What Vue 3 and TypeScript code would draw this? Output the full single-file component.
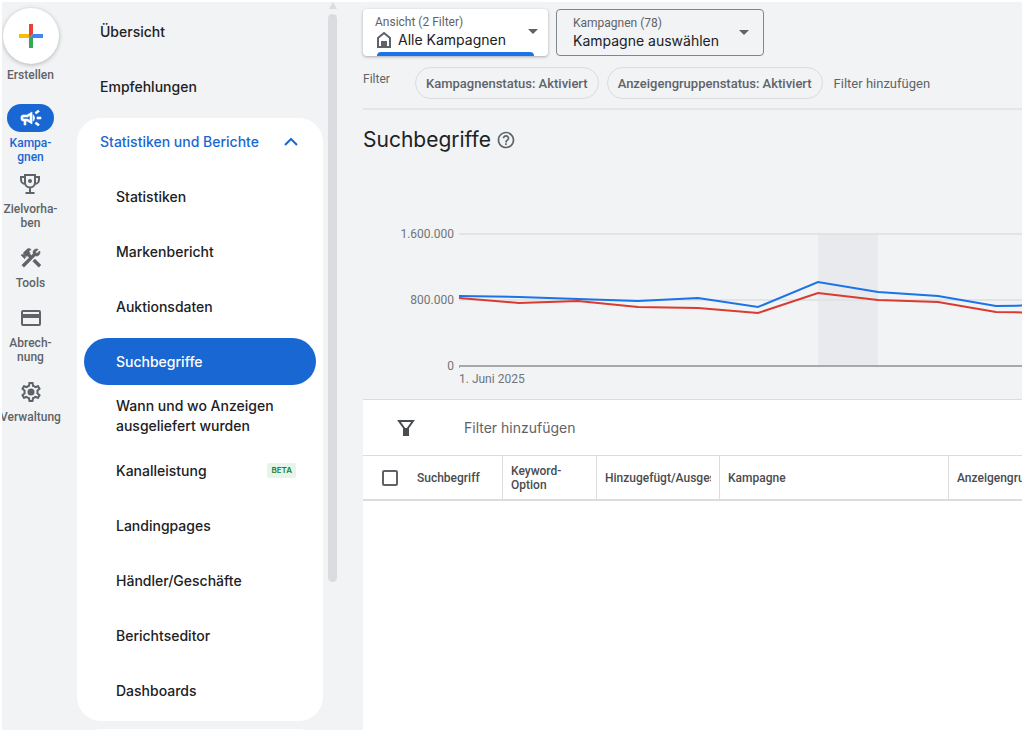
<script setup lang="ts">
import { ref } from 'vue'

interface RailItem {
  icon: 'campaign' | 'trophy' | 'tools' | 'card' | 'settings'
  lines: string[]
  active?: boolean
}

interface NavItem {
  lines: string[]
  active?: boolean
  badge?: string
}

const railItems: RailItem[] = [
  { icon: 'campaign', lines: ['Kampa-', 'gnen'], active: true },
  { icon: 'trophy', lines: ['Zielvorha-', 'ben'] },
  { icon: 'tools', lines: ['Tools'] },
  { icon: 'card', lines: ['Abrech-', 'nung'] },
  { icon: 'settings', lines: ['Verwaltung'] },
]

const topLinks = ['Übersicht', 'Empfehlungen']

const reportItems: NavItem[] = [
  { lines: ['Statistiken'] },
  { lines: ['Markenbericht'] },
  { lines: ['Auktionsdaten'] },
  { lines: ['Suchbegriffe'], active: true },
  { lines: ['Wann und wo Anzeigen', 'ausgeliefert wurden'] },
  { lines: ['Kanalleistung'], badge: 'BETA' },
  { lines: ['Landingpages'] },
  { lines: ['Händler/Geschäfte'] },
  { lines: ['Berichtseditor'] },
  { lines: ['Dashboards'] },
]

const chips = ['Kampagnenstatus: Aktiviert', 'Anzeigengruppenstatus: Aktiviert']

const blueSeries = '0,66 60,67 119,69 179,71 239,68 299,77 359,52 419,62 479,66 537,76 600,75'
const redSeries = '0,68 60,73 119,71 179,77 239,78 299,83 359,63 419,70 479,72 537,82 600,83'

const reportsOpen = ref(true)
const allSelected = ref(false)
</script>

<template>
  <div class="shell">
    <nav class="rail" aria-label="Hauptmenü">
      <button class="rail-item create" type="button">
        <span class="create-disc">
          <svg width="24" height="24" viewBox="0 0 24 24" aria-hidden="true">
            <path d="M10 0h4v10l-4 4z" fill="#ea4335" />
            <path d="M0 10h10v4H0z" fill="#fbbc04" />
            <path d="M14 10h10v4H10z" fill="#4285f4" />
            <path d="M10 14h4v10h-4z" fill="#34a853" />
          </svg>
        </span>
        <span class="rail-label">Erstellen</span>
      </button>
      <a
        v-for="item in railItems"
        :key="item.icon"
        href="#"
        class="rail-item"
        :class="{ active: item.active }"
      >
        <span class="rail-icon">
          <svg width="24" height="24" viewBox="0 0 24 24" fill="currentColor" aria-hidden="true">
            <path
              v-if="item.icon === 'campaign'"
              stroke="currentColor"
              stroke-width="0.6"
              d="M18 11v2h4v-2h-4zm-2 6.61c.96.71 2.21 1.65 3.2 2.39.4-.53.8-1.07 1.2-1.6-.99-.74-2.24-1.68-3.2-2.4-.4.54-.8 1.08-1.2 1.61zM20.4 5.6c-.4-.53-.8-1.07-1.2-1.6-.99.74-2.24 1.68-3.2 2.4.4.53.8 1.07 1.2 1.6.96-.72 2.21-1.65 3.2-2.4zM4 9c-1.1 0-2 .9-2 2v2c0 1.1.9 2 2 2h1v4h2v-4h1l5 3V6L8 9H4zm5.03 1.71L11 9.53v4.94l-1.97-1.18-.48-.29H4v-2h4.55l.48-.29zM15.5 12c0-1.33-.58-2.53-1.5-3.35v6.69c.92-.81 1.5-2.01 1.5-3.34z"
            />
            <g v-else-if="item.icon === 'trophy'">
              <path
                d="M7 3h10v7.500a5 5 0 0 1-10 0zM7 5H3v2.500c0 2.500 1.800 4.500 4.300 4.500M17 5h4v2.500c0 2.500-1.800 4.500-4.300 4.500M12 15.500V20M7.500 21h9"
                fill="none"
                stroke="currentColor"
                stroke-width="2"
              />
              <circle cx="12" cy="9" r="2" />
            </g>
            <path
              v-else-if="item.icon === 'tools'"
              stroke="currentColor"
              stroke-width="0.6"
              d="M13.783 15.172l2.121-2.121 5.996 5.996-2.121 2.121zM17.5 10c1.93 0 3.5-1.57 3.5-3.5 0-.58-.16-1.12-.41-1.6l-2.7 2.7-1.49-1.49 2.7-2.7c-.48-.25-1.02-.41-1.6-.41C15.57 3 14 4.57 14 6.5c0 .41.08.8.21 1.16l-1.85 1.85-1.78-1.78.71-.71-1.41-1.41L12 3.490c-1.17-1.17-3.07-1.17-4.24 0L4.220 7.030l1.41 1.41H2.810l-.71.71 3.54 3.54.71-.71V9.150l1.41 1.41.71-.71 1.78 1.78-7.41 7.41 2.12 2.12L16.340 9.790c.36.13.75.21 1.16.21z"
            />
            <path
              v-else-if="item.icon === 'card'"
              fill-rule="evenodd"
              d="M4 4h16a2 2 0 0 1 2 2v12a2 2 0 0 1-2 2H4a2 2 0 0 1-2-2V6a2 2 0 0 1 2-2zm0 2v2h16V6zm0 6v6h16v-6z"
            />
            <g v-else>
              <path
                d="M19.43 12.98c.04-.32.07-.64.07-.98 0-.34-.03-.66-.07-.98l2.11-1.65c.19-.15.24-.42.12-.64l-2-3.460c-.09-.16-.26-.25-.44-.25-.06 0-.12.01-.17.03l-2.490 1c-.52-.4-1.08-.73-1.69-.98l-.38-2.650C14.460 2.180 14.250 2 14 2h-4c-.25 0-.46.18-.49.42l-.38 2.650c-.61.25-1.17.59-1.69.98l-2.490-1c-.06-.02-.12-.03-.18-.03-.17 0-.34.09-.43.25l-2 3.460c-.13.22-.07.49.12.64l2.110 1.650c-.04.32-.07.65-.07.98 0 .33.03.66.07.98l-2.110 1.650c-.19.15-.24.42-.12.64l2 3.460c.09.16.26.25.44.25.06 0 .12-.01.17-.03l2.490-1c.52.4 1.080.73 1.690.98l.38 2.650c.03.24.24.42.49.42h4c.25 0 .46-.18.49-.42l.38-2.650c.61-.25 1.170-.59 1.690-.98l2.490 1c.06.02.12.03.18.03.17 0 .34-.09.43-.25l2-3.460c.12-.22.07-.49-.12-.64l-2.110-1.650zm-1.98-1.710c.04.31.05.52.05.73 0 .21-.02.43-.05.73l-.14 1.130.89.7 1.080.84-.7 1.210-1.270-.51-1.040-.42-.9.68c-.43.32-.84.56-1.250.73l-1.060.43-.16 1.130-.2 1.350h-1.400l-.19-1.350-.16-1.130-1.060-.43c-.43-.18-.83-.41-1.230-.71l-.91-.7-1.060.43-1.270.51-.7-1.210 1.080-.84.89-.7-.14-1.130c-.03-.31-.05-.54-.05-.74s.02-.43.05-.73l.14-1.130-.89-.7-1.080-.84.7-1.210 1.270.51 1.040.42.9-.68c.43-.32.84-.56 1.250-.73l1.060-.43.16-1.130.2-1.350h1.390l.19 1.350.16 1.130 1.060.43c.43.18.83.41 1.230.71l.91.7 1.060-.43 1.270-.51.7 1.210-1.070.85-.89.7.14 1.130z"
              />
              <circle cx="12" cy="12" r="3.5" />
            </g>
          </svg>
        </span>
        <span class="rail-label">
          <span v-for="line in item.lines" :key="line">{{ line }}</span>
        </span>
      </a>
    </nav>

    <nav class="side" aria-label="Kampagnenmenü">
      <a v-for="link in topLinks" :key="link" class="side-link top" href="#">{{ link }}</a>
      <section class="group">
        <button
          class="side-link group-head"
          type="button"
          :aria-expanded="reportsOpen"
          @click="reportsOpen = !reportsOpen"
        >
          Statistiken und Berichte
          <svg width="14" height="8" viewBox="0 0 14 8" aria-hidden="true">
            <path d="M1 7l6-6 6 6" fill="none" stroke="currentColor" stroke-width="2" />
          </svg>
        </button>
        <template v-if="reportsOpen">
          <a
            v-for="item in reportItems"
            :key="item.lines[0]"
            href="#"
            class="side-link sub"
            :class="{ active: item.active, double: item.lines.length > 1 }"
          >
            <span class="sub-text">
              <span v-for="line in item.lines" :key="line">{{ line }}</span>
            </span>
            <span v-if="item.badge" class="badge">{{ item.badge }}</span>
          </a>
        </template>
      </section>
      <section class="group next"></section>
    </nav>

    <div class="scroll" aria-hidden="true">
      <span class="scroll-arrow"></span>
      <span class="scroll-thumb"></span>
    </div>

    <main class="main">
      <div class="pickers">
        <button class="picker view" type="button">
          <span class="picker-text">
            <span class="picker-label">Ansicht (2 Filter)</span>
            <span class="picker-value">
              <svg width="16" height="16" viewBox="0 0 16 16" aria-hidden="true">
                <path d="M2 6l6-5 6 5v9H2z" fill="none" stroke="#5f6368" stroke-width="2" />
                <path d="M5 9h6v6H5z" fill="#5f6368" />
              </svg>
              Alle Kampagnen
            </span>
          </span>
          <span class="caret"></span>
          <span class="underline"></span>
        </button>
        <button class="picker outlined" type="button">
          <span class="picker-text">
            <span class="picker-label">Kampagnen (78)</span>
            <span class="picker-value">Kampagne auswählen</span>
          </span>
          <span class="caret"></span>
        </button>
      </div>

      <div class="filters">
        <span class="filters-title">Filter</span>
        <button v-for="chip in chips" :key="chip" class="chip" type="button">{{ chip }}</button>
        <button class="add-filter" type="button">Filter hinzufügen</button>
      </div>

      <header class="title">
        <h1>Suchbegriffe</h1>
        <button class="help" type="button" aria-label="Hilfe">
          <svg width="20" height="20" viewBox="0 0 24 24" fill="#5f6368" aria-hidden="true">
            <path
              d="M11 18h2v-2h-2v2zm1-16C6.480 2 2 6.480 2 12s4.480 10 10 10 10-4.480 10-10S17.520 2 12 2zm0 18c-4.410 0-8-3.590-8-8s3.590-8 8-8 8 3.590 8 8-3.590 8-8 8zm0-14c-2.210 0-4 1.790-4 4h2c0-1.100.9-2 2-2s2 .9 2 2c0 2-3 1.750-3 5h2c0-2.250 3-2.500 3-5 0-2.210-1.790-4-4-4z"
            />
          </svg>
        </button>
      </header>

      <div class="chart">
        <div class="axis">
          <span>1.600.000</span>
          <span>800.000</span>
          <span>0</span>
        </div>
        <div class="plot">
          <svg width="100%" height="138" role="img" aria-label="Verlauf ab 1. Juni 2025">
            <rect x="359" y="4" width="60" height="132" fill="#e8eaed" />
            <path d="M0 4h4000M0 70h4000" stroke="#e1e3e5" stroke-width="2" />
            <path d="M0 138v-2h4000" fill="none" stroke="#a8a8a8" stroke-width="2" />
            <polyline :points="redSeries" fill="none" stroke="#db3a30" stroke-width="2" />
            <polyline :points="blueSeries" fill="none" stroke="#1a73e8" stroke-width="2" />
          </svg>
          <span class="date">1. Juni 2025</span>
        </div>
      </div>

      <section class="results">
        <div class="toolbar">
          <svg width="18" height="18" viewBox="0 0 18 18" aria-hidden="true">
            <path d="M2 2h14l-5 7v7H7V9z" fill="none" stroke="#4a4d51" stroke-width="2" />
            <path d="M7 9h4v7H7z" fill="#4a4d51" />
          </svg>
          <button class="toolbar-add" type="button">Filter hinzufügen</button>
        </div>
        <table>
          <colgroup>
            <col class="c-check" />
            <col class="c-term" />
            <col class="c-keyword" />
            <col class="c-added" />
            <col class="c-campaign" />
            <col />
          </colgroup>
          <thead>
            <tr>
              <td class="check">
                <input v-model="allSelected" type="checkbox" aria-label="Alle auswählen" />
              </td>
              <th class="first" scope="col">Suchbegriff</th>
              <th scope="col">Keyword-<br />Option</th>
              <th scope="col"><span class="clip">Hinzugefügt/Ausgeschlossen</span></th>
              <th scope="col">Kampagne</th>
              <th scope="col">Anzeigengruppe</th>
            </tr>
          </thead>
        </table>
      </section>
    </main>
  </div>
</template>

<style>
body {
  margin: 0;
}
</style>

<style scoped>
.shell {
  box-sizing: border-box;
  display: flex;
  height: 100vh;
  overflow: hidden;
  border: 2px solid #fff;
  background: #f1f3f4;
  color: #5f6368;
  font-family: Roboto, "Liberation Sans", sans-serif;
  font-size: 12px;
}

button {
  padding: 0;
  border: 0;
  background: none;
  color: inherit;
  font: inherit;
  text-align: left;
  cursor: pointer;
}

a {
  color: inherit;
  text-decoration: none;
}

svg {
  display: block;
  flex: none;
}

.rail {
  display: flex;
  flex: none;
  flex-direction: column;
  align-items: center;
  gap: 14px;
  width: 57px;
  padding-top: 6px;
}

.rail-item {
  display: flex;
  flex-direction: column;
  align-items: center;
  gap: 4px;
  font-weight: 500;
  line-height: 14px;
  white-space: nowrap;
}

.rail-item.create {
  margin-bottom: 8px;
}

.create-disc {
  display: flex;
  align-items: center;
  justify-content: center;
  width: 56px;
  height: 56px;
  border-radius: 50%;
  background: #fff;
  box-shadow: 0 1px 4px rgba(60, 64, 67, 0.35);
}

.rail-icon {
  display: flex;
  align-items: center;
  justify-content: center;
  width: 47px;
  height: 28px;
  border-radius: 14px;
}

.rail-label {
  display: flex;
  flex-direction: column;
  align-items: center;
}

.rail-item.active {
  margin-bottom: -8px;
  color: #1967d2;
}

.rail-item.active .rail-icon {
  background: #1967d2;
  color: #fff;
}

.side {
  display: flex;
  flex: none;
  flex-direction: column;
  gap: 8px;
  width: 246px;
  margin-left: 18px;
  padding-top: 6px;
  color: #202124;
  font-family: Inter, "Open Sans", sans-serif;
  font-size: 14px;
  font-weight: 500;
  line-height: 20px;
}

.side-link {
  display: flex;
  flex: none;
  align-items: center;
  justify-content: space-between;
  box-sizing: border-box;
  min-height: 47px;
}

.side-link.top {
  padding-left: 23px;
}

.group {
  display: flex;
  flex: none;
  flex-direction: column;
  gap: 8px;
  padding: 0 7px 7px;
  border-radius: 24px;
  background: #fff;
}

.group.next {
  min-height: 47px;
}

.group-head {
  padding: 0 18px 0 16px;
  color: #1967d2;
}

.side-link.sub {
  padding: 0 20px 0 32px;
  border-radius: 24px;
}

.side-link.double {
  min-height: 46px;
}

.side-link.active {
  background: #1967d2;
  color: #fff;
}

.sub-text {
  display: flex;
  flex-direction: column;
}

.badge {
  padding: 0 4px;
  border-radius: 2px;
  background: #e6f4ea;
  color: #188038;
  font-size: 8px;
  font-weight: 600;
  line-height: 15px;
}

.scroll {
  display: flex;
  flex: none;
  flex-direction: column;
  align-items: center;
  gap: 5px;
  width: 9px;
  margin-left: 5px;
}

.scroll-arrow {
  border: 4px solid transparent;
  border-top: 0;
  border-bottom: 7px solid #dadce0;
}

.scroll-thumb {
  width: 9px;
  height: 78%;
  border-radius: 5px;
  background: #dadce0;
}

.main {
  display: flex;
  flex: 1;
  flex-direction: column;
  min-width: 0;
  margin-left: 26px;
}

.pickers {
  display: flex;
  gap: 8px;
  padding-top: 7px;
}

.picker {
  position: relative;
  display: flex;
  align-items: center;
  justify-content: space-between;
  box-sizing: border-box;
  height: 47px;
  border-radius: 4px;
}

.picker.view {
  width: 185px;
  padding: 0 10px 2px 12px;
  background: #fff;
  box-shadow: 0 1px 3px rgba(60, 64, 67, 0.4);
}

.picker.outlined {
  width: 208px;
  padding: 0 14px 0 16px;
  border: 1px solid #80868b;
}

.picker-text {
  display: flex;
  flex-direction: column;
}

.picker-label {
  line-height: 16px;
}

.picker-value {
  display: flex;
  align-items: center;
  gap: 6px;
  padding-left: 1px;
  color: #202124;
  font-family: Inter, "Open Sans", sans-serif;
  font-size: 14px;
  line-height: 20px;
}

.outlined .picker-value {
  padding-left: 0;
}

.caret {
  border: 5px solid transparent;
  border-top-color: #5f6368;
  border-bottom: 0;
}

.underline {
  position: absolute;
  right: 14px;
  bottom: 0;
  left: 14px;
  height: 4px;
  border-radius: 4px 4px 0 0;
  background: #1a73e8;
}

.filters {
  display: flex;
  align-items: center;
  gap: 8px;
  padding: 11px 0 9px;
  border-bottom: 2px solid #e3e5e8;
}

.filters-title {
  width: 44px;
  padding-bottom: 8px;
}

.chip {
  height: 32px;
  padding: 0 10px;
  border: 1px solid #dadce0;
  border-radius: 16px;
  font-size: 13px;
  font-weight: 500;
}

.add-filter {
  padding-left: 3px;
  font-size: 13px;
}

.title {
  display: flex;
  align-items: center;
  gap: 5px;
  height: 60px;
}

h1 {
  margin: 0;
  color: #202124;
  font-family: Inter, "Open Sans", sans-serif;
  font-size: 21px;
  font-weight: 400;
  line-height: 28px;
}

.chart {
  display: flex;
  gap: 5px;
  padding: 60px 0 12px;
  color: #70757a;
}

.axis {
  display: flex;
  flex: none;
  flex-direction: column;
  justify-content: space-between;
  width: 91px;
  height: 146px;
  margin-top: -3px;
  text-align: right;
  line-height: 14px;
}

.plot {
  flex: 1;
  min-width: 0;
}

.date {
  display: block;
  padding-top: 3px;
  line-height: 16px;
}

.results {
  flex: 1;
  overflow: hidden;
  border-top: 1px solid #dadce0;
  background: #fff;
}

.toolbar {
  display: flex;
  align-items: center;
  gap: 49px;
  height: 55px;
  padding-left: 34px;
  border-bottom: 1px solid #dadce0;
  font-family: Inter, "Open Sans", sans-serif;
  font-size: 14px;
}

table {
  width: 100%;
  border-spacing: 0;
  border-bottom: 2px solid #dadce0;
  table-layout: fixed;
  color: #494c50;
}

.c-check {
  width: 46px;
}

.c-term {
  width: 93px;
}

.c-keyword {
  width: 94px;
}

.c-added {
  width: 123px;
}

.c-campaign {
  width: 229px;
}

th,
td {
  box-sizing: border-box;
  height: 43px;
  padding: 0 8px;
  border-left: 1px solid #dadce0;
  font-weight: 500;
  line-height: 14px;
  text-align: left;
  white-space: nowrap;
  overflow: hidden;
}

td.check,
th.first {
  border-left: 0;
}

td.check {
  padding: 0 0 0 19px;
}

.clip {
  display: block;
  overflow: hidden;
}

input {
  display: block;
  box-sizing: border-box;
  width: 16px;
  height: 16px;
  margin: 0;
  border: 2px solid #5f6368;
  border-radius: 2px;
  background: #fff;
  appearance: none;
}

input:checked {
  background: #1a73e8;
}
</style>
